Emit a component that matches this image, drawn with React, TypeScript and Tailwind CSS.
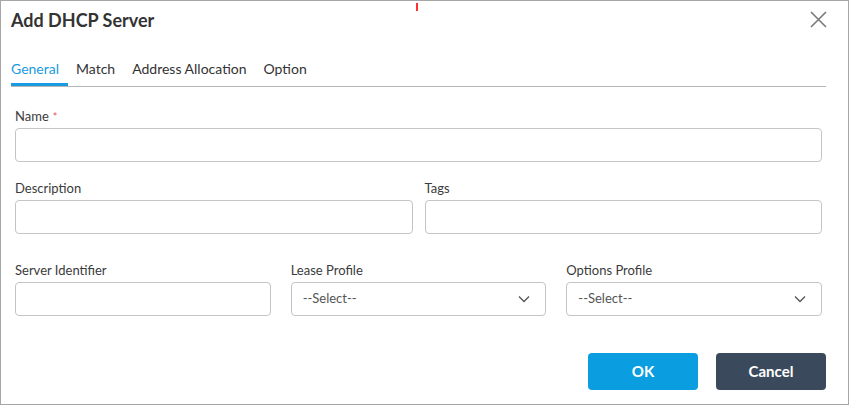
import React from 'react'

const tabs = ['General', 'Match', 'Address Allocation', 'Option']

function Label({ text, required }: { text: string; required?: boolean }) {
  return (
    <div className="h-[16px] leading-[16px] text-[13px] text-[#3b3b3b] mb-[4px]">
      {text}
      {required && <span className="text-[#f0505a] ml-[4px] text-[11px]">*</span>}
    </div>
  )
}

function TextInput() {
  return <div className="h-[34px] rounded-[4px] border border-[#c4c4c4] bg-white" />
}

function SelectBox() {
  return (
    <div className="h-[34px] rounded-[4px] border border-[#c4c4c4] bg-white flex items-center justify-between pl-[11px] pr-[15px]">
      <span className="text-[13px] text-[#555]">--Select--</span>
      <svg width="12" height="8" viewBox="0 0 12 8" fill="none">
        <path d="M1 1.5L6 6.5L11 1.5" stroke="#555" strokeWidth="1.3" />
      </svg>
    </div>
  )
}

export default function App() {
  return (
    <div className="w-[850px] h-[406px] bg-white" style={{ fontFamily: 'Lato, "Open Sans", sans-serif' }}>
      <div className="relative w-[849px] h-[405px] border border-[#a6a6a6] bg-white">
        <div className="absolute left-[415px] top-[2px] w-[1.5px] h-[8px] bg-[#ff3030]" />

        <div className="h-[37px] flex items-center justify-between pl-[10px] pr-[21px]">
          <h1 className="text-[18px] font-bold text-[#333] leading-none">Add DHCP Server</h1>
          <svg width="17" height="17" viewBox="0 0 17 17" fill="none">
            <path d="M1 1L16 16M16 1L1 16" stroke="#7a7a7a" strokeWidth="1.6" />
          </svg>
        </div>

        <div className="mx-[10px] w-[815px] h-[49px] border-b border-[#b5b5b5] flex items-end gap-[8px]">
          {tabs.map((t, i) => (
            <div
              key={t}
              className={
                'pb-[4px] pr-[9px] leading-[20px] text-[14px] border-b-[3px] ' +
                (i === 0 ? 'text-[#1a9ae0] border-[#1a9ae0]' : 'text-[#333] border-transparent')
              }
            >
              {t}
            </div>
          ))}
        </div>

        <div className="mx-[14px] w-[807px] mt-[21px]">
          <Label text="Name" required />
          <TextInput />

          <div className="grid grid-cols-2 gap-x-[12px] mt-[18px]">
            <div>
              <Label text="Description" />
              <TextInput />
            </div>
            <div>
              <Label text="Tags" />
              <TextInput />
            </div>
          </div>

          <div className="grid grid-cols-3 gap-x-[20px] mt-[28px]">
            <div>
              <Label text="Server Identifier" />
              <TextInput />
            </div>
            <div>
              <Label text="Lease Profile" />
              <SelectBox />
            </div>
            <div>
              <Label text="Options Profile" />
              <SelectBox />
            </div>
          </div>
        </div>

        <div className="flex justify-end gap-[18px] mr-[22px] mt-[37px]">
          <button className="w-[110px] h-[37px] rounded-[4px] bg-[#0a9de0] text-white text-[15px] font-bold">OK</button>
          <button className="w-[110px] h-[37px] rounded-[4px] bg-[#3a4a5c] text-white text-[15px] font-bold">Cancel</button>
        </div>
      </div>
    </div>
  )
}
